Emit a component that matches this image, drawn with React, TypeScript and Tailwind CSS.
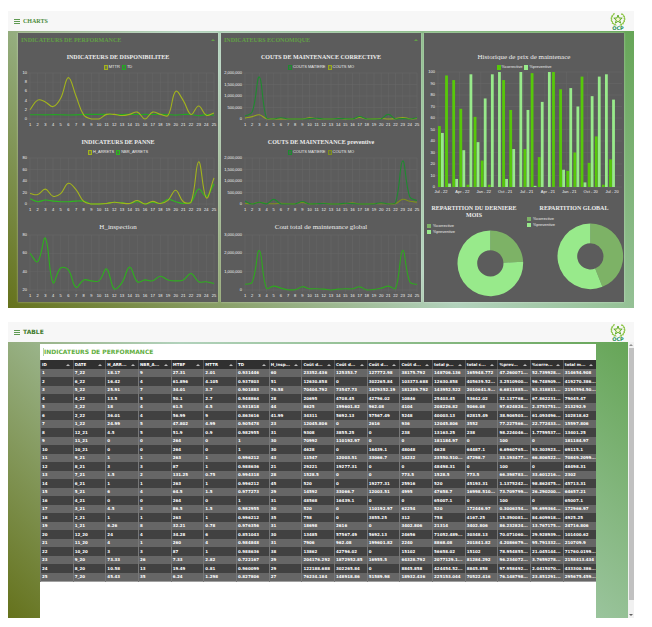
import React from "react";

const MONTHS = Array.from({ length: 25 }, (_, i) => i + 1);

const HEADERS = [
  "ID", "DATE", "H_ARR...", "NBR_A...", "MTBF", "MTTR", "TD", "H_insp...", "Coût d...", "Coût d...",
  "Coût d...", "Coût d...", "total p...", "total c...", "%prev...", "%corre...", "total m...",
];

const ROWS = `1|7_22|18.17|9|27.31|2.01|0.931446|60|23352.436|125353.7|127772.98|38175.792|148706.136|165948.772|47.260071...|52.739928...|314654.908
2|6_22|16.42|4|61.896|4.105|0.937803|51|12630.858|0|302265.84|103373.688|12630.858|405639.52...|3.2510900...|96.748909...|419270.386...
3|5_22|25.91|7|34.01|3.7|0.901883|76.58|70404.792|73547.73|1829352.19|181289.792|143952.522|2010641.9...|6.6811885...|93.318811...|2154594.50...
4|4_22|13.5|5|50.1|2.7|0.948864|28|20695|4708.45|42796.02|10846|25403.45|53642.02|32.137768...|67.862231...|79045.47
5|3_22|18|4|61.5|4.5|0.931818|44|8625|199601.82|962.08|4104|208226.82|5066.08|97.624824...|2.3751751...|213292.9
6|2_22|36.01|4|56.99|9|0.863616|41.99|34311|5692.13|57567.49|5248|40003.13|62815.49|38.906503...|61.093496...|102818.62
7|1_22|24.99|5|47.802|4.99|0.905478|23|12045.806|0|2616|936|12045.806|3552|77.227566...|22.772433...|15597.806
8|12_21|4.5|5|51.9|0.9|0.982955|31|9308|3855.25|0|238|13163.25|238|98.224046...|1.7759537...|13401.25
9|11_21|0|0|264|0|1|30|70992|110192.97|0|0|181184.97|0|100|0|181184.97
10|10_21|0|0|264|0|1|30|4628|0|16439.1|48048|4628|64487.1|6.6960765...|93.303923...|69115.1
11|9_21|1|1|263|1|0.996212|43|11547|12003.51|33066.7|14232|23550.510...|47298.7|33.193477...|66.806522...|70849.2099...
12|8_21|3|3|87|1|0.988636|21|29221|19277.31|0|0|48498.31|0|100|0|48498.31
13|7_21|1.5|2|131.25|0.75|0.994318|28|1528.5|0|0|773.5|1528.5|773.5|66.398783...|33.601216...|2302
14|6_21|1|1|263|1|0.996212|45|520|0|19277.31|25916|520|45193.31|1.1375242...|98.862475...|45713.31
15|5_21|6|4|64.5|1.5|0.977273|29|14592|33066.7|12003.51|4995|47658.7|16998.510...|73.709799...|26.290200...|64657.21
16|4_21|0|0|264|0|1|31|48568|16439.1|0|0|65007.1|0|100|0|65007.1
17|3_21|4.5|3|86.5|1.5|0.982955|30|520|0|110192.97|62254|520|172446.97|0.3006354...|99.699364...|172966.97
18|2_21|1|1|263|1|0.996212|35|758|0|3855.25|312|758|4167.25|15.390081...|84.609918...|4925.25
19|1_21|6.26|8|32.21|0.78|0.976356|31|18698|2616|0|3402.806|21314|3402.806|86.232824...|13.767175...|24716.806
20|12_20|24|4|34.28|6|0.851043|30|13485|57567.49|5692.13|24656|71052.489...|30348.13|70.071060...|29.928939...|101400.62
21|11_20|4|1|260|4|0.984848|31|7906|962.08|199601.82|2240|8868.08|201841.82|4.2086679...|95.791332...|210709.9
22|10_20|3|3|87|1|0.988636|38|13862|42796.02|0|15102|56658.02|15102|78.954855...|21.045144...|71760.0199...
23|9_20|73.33|26|7.33|2.82|0.722167|29|204176.292|1872952.85|16955.5|64328.792|2077129.1...|81284.292|96.234072...|3.7659278...|2158413.434
24|8_20|10.58|13|19.49|0.81|0.960099|29|122188.688|302265.84|0|8845.858|424454.52...|8845.858|97.958492...|2.0415070...|433300.386...
25|7_20|45.43|35|6.24|1.298|0.827806|27|76234.184|148918.86|51589.98|18932.436|225153.044|70522.416|76.148798...|23.851291...|295675.459...`
  .split("\n")
  .map((line) => line.split("|"));

const column = (i: number) => ROWS.map((r) => parseFloat(r[i]));

const CORRECTIVE = [53, 97, 93, 68, 2, 61, 23, 2, 0, 93, 67, 0, 33, 99, 26, 0, 100, 85, 14, 30, 96, 21, 44, 2, 24];
const PREVENTIVE = [47, 3, 7, 32, 98, 39, 77, 98, 100, 7, 33, 100, 67, 1, 74, 100, 0, 15, 86, 70, 4, 79, 96, 98, 76];

type Point = { x: number; y: number };

// Smooth curve through the points; control points stay inside the plot.
function curve(pts: Point[], top: number, bottom: number) {
  const t = 0.4;
  const clamp = (y: number) => Math.min(bottom, Math.max(top, y));
  const ctrl = pts.map((p, i) => {
    const a = pts[Math.max(0, i - 1)];
    const b = pts[Math.min(pts.length - 1, i + 1)];
    const d1 = Math.hypot(p.x - a.x, p.y - a.y);
    const d2 = Math.hypot(b.x - p.x, b.y - p.y);
    const f1 = (t * d1) / (d1 + d2);
    const f2 = (t * d2) / (d1 + d2);
    return {
      px: p.x - f1 * (b.x - a.x),
      py: clamp(p.y - f1 * (b.y - a.y)),
      nx: p.x + f2 * (b.x - a.x),
      ny: clamp(p.y + f2 * (b.y - a.y)),
    };
  });
  return pts
    .map((p, i) =>
      i === 0 ? `M${p.x},${p.y}` : `C${ctrl[i - 1].nx},${ctrl[i - 1].ny} ${ctrl[i].px},${ctrl[i].py} ${p.x},${p.y}`,
    )
    .join(" ");
}

type Series = { name: string; color: string; values: number[] };

function Legend({ items }: { items: { name: string; color: string; filled?: boolean }[] }) {
  return (
    <ul className="flex h-2 items-center justify-center gap-[2px] text-[4px] leading-none text-[#ececec]">
      {items.map((s) => (
        <li key={s.name} className="flex items-center gap-px">
          <span
            className="h-[5px] w-1 border"
            style={{ borderColor: s.color, backgroundColor: s.filled ? s.color : `${s.color}55` }}
          />
          {s.name}
        </li>
      ))}
    </ul>
  );
}

function ChartTitle({ children, large }: { children: React.ReactNode; large?: boolean }) {
  return (
    <h3
      className={`py-[3px] text-center font-['Liberation_Serif',serif] leading-[6px] text-[#ececec] ${
        large ? "text-[7px]" : "text-[6px] font-bold"
      }`}
    >
      {children}
    </h3>
  );
}

function LineChart(props: {
  title: string;
  series: Series[];
  ticks: number[];
  left: number;
  right: number;
  plot: number;
  height: number;
  legend?: boolean;
}) {
  const { title, series, ticks, left, right, plot, height, legend } = props;
  const top = 2;
  const min = ticks[0];
  const max = ticks[ticks.length - 1];
  const bottom = top + plot;
  const x = (i: number) => left + ((right - left) * i) / 24;
  const y = (v: number) => bottom - ((v - min) / (max - min)) * plot;
  return (
    <figure>
      <ChartTitle large={!legend}>{title}</ChartTitle>
      {legend && <Legend items={series} />}
      <svg
        viewBox={`0 0 200 ${height}`}
        className="block w-full overflow-visible font-['Liberation_Sans',sans-serif] text-[4px]"
        role="img"
        aria-label={title}
      >
        <g stroke="#686868" strokeWidth="0.5">
          {MONTHS.map((m, i) => (
            <line key={m} x1={x(i)} x2={x(i)} y1={top} y2={bottom + 2} />
          ))}
          {ticks.map((v) => (
            <line key={v} x1={left - 2} x2={right} y1={y(v)} y2={y(v)} />
          ))}
        </g>
        <g fill="#f4f4f4">
          {ticks.map((v) => (
            <text key={v} x={left - 3} y={y(v) + 1} textAnchor="end">
              {v.toLocaleString("en-US")}
            </text>
          ))}
          {MONTHS.map((m, i) => (
            <text key={m} x={x(i)} y={bottom + 7} textAnchor="middle">
              {m}
            </text>
          ))}
        </g>
        {[...series].reverse().map((s) => (
          <path
            key={s.name}
            d={curve(s.values.map((v, i) => ({ x: x(i), y: y(v) })), top, bottom)}
            fill="none"
            stroke={s.color}
            strokeWidth="1.1"
          />
        ))}
      </svg>
    </figure>
  );
}

function BarChart() {
  const left = 14;
  const base = 116;
  const step = 7.13;
  const names = ["Jul - 22", "Apr - 22", "Jan - 22", "Oct - 21", "Jul - 21", "Apr - 21", "Jan - 21", "Oct - 20", "Jul - 20"];
  const h = (v: number) => v * 1.15;
  return (
    <figure>
      <ChartTitle large>Historique de prix de maintenace</ChartTitle>
      <Legend
        items={[
          { name: "%corrective", color: "#57c80a", filled: true },
          { name: "%preventive", color: "#98ea8b", filled: true },
        ]}
      />
      <svg
        viewBox="0 0 200 126"
        className="block w-full overflow-visible font-['Liberation_Sans',sans-serif] text-[4px]"
        role="img"
        aria-label="Historique de prix de maintenace"
      >
        <g stroke="#686868" strokeWidth="0.5">
          {MONTHS.filter((m) => m % 3 === 1).map((m) => (
            <line key={m} x1={left + (m - 1) * step} x2={left + (m - 1) * step} y1="1" y2={base + 2} />
          ))}
          {MONTHS.slice(0, 11).map((m) => (
            <line key={m} x1={left - 2} x2="198" y1={base - h((m - 1) * 10)} y2={base - h((m - 1) * 10)} />
          ))}
        </g>
        {CORRECTIVE.map((c, i) => (
          <g key={i}>
            <rect x={left + i * step} y={base - h(c)} width="2.8" height={h(c)} fill="#57c80a" />
            <rect x={left + 3 + i * step} y={base - h(PREVENTIVE[i])} width="2.8" height={h(PREVENTIVE[i])} fill="#98ea8b" />
          </g>
        ))}
        <g fill="#f4f4f4">
          {MONTHS.slice(0, 11).map((m) => (
            <text key={m} x={left - 3} y={base + 1 - h((m - 1) * 10)} textAnchor="end">
              {(m - 1) * 10}
            </text>
          ))}
          {names.map((n, i) => (
            <text key={n} x={left + 3 + i * 3 * step} y={base + 6} textAnchor="middle">
              {n}
            </text>
          ))}
        </g>
      </svg>
    </figure>
  );
}

function Donut({ title, share }: { title: string; share: number }) {
  const a = share * 2 * Math.PI;
  const pt = (r: number, t: number) => `${33 + r * Math.sin(t)},${33 - r * Math.cos(t)}`;
  const slice = (from: number, to: number) =>
    `M${pt(32.5, from)} A32.5,32.5 0 ${to - from > Math.PI ? 1 : 0} 1 ${pt(32.5, to)} L${pt(13, to)} A13,13 0 ${
      to - from > Math.PI ? 1 : 0
    } 0 ${pt(13, from)} Z`;
  return (
    <figure className="min-w-0 flex-1">
      <h3 className="px-1 text-center font-['Liberation_Serif',serif] text-[6px] leading-[7px] font-bold text-[#ececec]">
        {title}
      </h3>
      <ul className="mt-1 ml-[3px] text-[4px] leading-[6px] text-[#ececec]">
        <li className="flex items-center gap-[2px]">
          <span className="size-1 bg-[#7db266]" />
          %corrective
        </li>
        <li className="flex items-center gap-[2px]">
          <span className="size-1 bg-[#98ea8b]" />
          %preventive
        </li>
      </ul>
      <svg viewBox="0 0 66 66" className="-mt-[5px] ml-auto block w-2/3" role="img" aria-label={title}>
        <path d={slice(0, a)} fill="#7db266" />
        <path d={slice(a, 2 * Math.PI)} fill="#98ea8b" />
      </svg>
    </figure>
  );
}

function OcpLogo() {
  const leaves = [-150, -128, -106, -84, -62, -40, 40, 62, 84, 106, 128, 150];
  return (
    <svg viewBox="0 0 16 19" className="h-[19px] w-4" role="img" aria-label="OCP">
      <g fill="none" stroke="#7aba3c" strokeWidth="0.8">
        <path d="M4.5 1.5 A6.3 6.3 0 0 0 6.5 13.2 M11.5 1.5 A6.3 6.3 0 0 1 9.5 13.2" />
      </g>
      {leaves.map((d) => (
        <ellipse key={d} cx="8" cy="0.8" rx="0.6" ry="1.3" fill="#8cc63f" transform={`rotate(${d} 8 7.3) rotate(55 8 0.8)`} />
      ))}
      <path
        d="M8 3 L9.1 6 L12.2 6.1 L9.7 8 L10.6 11.1 L8 9.3 L5.4 11.1 L6.3 8 L3.8 6.1 L6.9 6 Z"
        fill="#f2f6c8"
        stroke="#62ac2c"
        strokeWidth="1"
      />
      <text
        x="8"
        y="18"
        textAnchor="middle"
        className="fill-[#24905a] font-['DejaVu_Sans',sans-serif] text-[5px] font-bold"
      >
        OCP
      </text>
    </svg>
  );
}

function TopBar({ children }: { children: React.ReactNode }) {
  return (
    <header className="flex h-5 items-center justify-between bg-[#f7f7f7] pr-2 pl-[6px]">
      <div className="flex items-center gap-[3px]">
        <button type="button" aria-label="Menu" className="flex w-[6px] flex-col gap-px">
          <span className="h-px bg-[#5f9a52]" />
          <span className="h-px bg-[#5f9a52]" />
          <span className="h-px bg-[#5f9a52]" />
        </button>
        {children}
      </div>
      <OcpLogo />
    </header>
  );
}

function Panel({ title, children }: { title: string; children: React.ReactNode }) {
  return (
    <section className="bg-[#5c5c5c] shadow-[0_0_2px_#ffffff80]">
      <div className="mb-[5px] flex h-[13px] items-center justify-between px-[3px]">
        <h2 className="font-['Liberation_Serif',serif] text-[6px] leading-none font-bold text-[#62a046]">{title}</h2>
        <button
          type="button"
          aria-label="Réduire"
          className="size-0 border-x-2 border-b-2 border-x-transparent border-b-[#62a046]"
        />
      </div>
      <div className="flex flex-col gap-[9px]">{children}</div>
    </section>
  );
}

export default function App() {
  const million = [0, 500000, 1000000, 1500000, 2000000];
  return (
    <main className="flex flex-col gap-[14px] bg-white pt-[11px] pr-[18px] pb-2 pl-2 font-['Liberation_Sans',sans-serif]">
      <section>
        <TopBar>
          <h1 className="font-['Liberation_Serif',serif] text-[6px] leading-none font-bold text-[#4a8a3a]">CHARTS</h1>
        </TopBar>
        <div className="grid grid-cols-3 gap-[3px] bg-[linear-gradient(45deg,#65721c,#b2d2bc_50%,#66a557)] px-[10px] pt-[2px] pb-[6px]">
          <Panel title="INDICATEURS DE PERFORMANCE">
            <LineChart
              title="INDICATEURS DE DISPONIBILITEE"
              legend
              ticks={[0, 2, 4, 6, 8, 10]}
              left={12}
              right={196}
              plot={46}
              height={56}
              series={[
                { name: "MTTR", color: "#a3b41c", values: column(5) },
                { name: "TD", color: "#22a822", values: column(6) },
              ]}
            />
            <LineChart
              title="INDICATEURS DE PANNE"
              legend
              ticks={[0, 20, 40, 60, 80]}
              left={12}
              right={196}
              plot={46}
              height={56}
              series={[
                { name: "H_ARRETS", color: "#a3b41c", values: column(2) },
                { name: "NBR_ARRETS", color: "#2eb81e", values: column(3) },
              ]}
            />
            <LineChart
              title="H_inspection"
              ticks={[20, 40, 60, 80]}
              left={12}
              right={196}
              plot={55}
              height={69}
              series={[{ name: "H_inspection", color: "#2eb01e", values: column(7) }]}
            />
          </Panel>
          <Panel title="INDICATEURS ECONOMIQUE">
            <LineChart
              title="COUTS DE MAINTENANCE CORRECTIVE"
              legend
              ticks={million}
              left={24}
              right={196}
              plot={46}
              height={56}
              series={[
                { name: "COUTS MATIERE", color: "#1f8a30", values: column(10) },
                { name: "COUTS MO", color: "#98a81c", values: column(11) },
              ]}
            />
            <LineChart
              title="COUTS DE MAINTENANCE preventive"
              legend
              ticks={million}
              left={24}
              right={196}
              plot={46}
              height={56}
              series={[
                { name: "COUTS MATIERE", color: "#1f8a30", values: column(9) },
                { name: "COUTS MO", color: "#7f8f1c", values: column(8) },
              ]}
            />
            <LineChart
              title="Cout total de maintenance global"
              ticks={[0, 1000000, 2000000, 3000000]}
              left={24}
              right={196}
              plot={55}
              height={69}
              series={[{ name: "Total", color: "#2ea81e", values: column(16) }]}
            />
          </Panel>
          <section className="bg-[#5c5c5c] pt-[18px] shadow-[0_0_2px_#ffffff80]">
            <BarChart />
            <div className="mt-2 flex items-start">
              <Donut title="REPARTITION DU DERNIERE MOIS" share={0.242} />
              <Donut title="REPARTITION GLOBAL" share={0.44} />
            </div>
          </section>
        </div>
      </section>

      <section className="font-['DejaVu_Sans',sans-serif] font-bold">
        <TopBar>
          <h1 className="text-[6px] leading-none text-[#3f7a2c]">TABLE</h1>
        </TopBar>
        <div className="flex">
          <div className="flex-1 bg-[linear-gradient(45deg,#65721c,#b2d2bc_50%,#66a557)] px-8 pt-[2px]">
            <div className="bg-white pb-9">
              <div className="flex h-4 items-center pl-[3px]">
                <h2 className="border-l border-[#b5d8a8] text-[6px] leading-[8px] text-[#5fae3e]">
                  INDICATEURS DE PERFORMANCE
                </h2>
              </div>
              <table className="w-full table-fixed border-collapse border-b border-[#a0a0a0] text-left text-[4px] leading-[4px] text-white">
                <thead>
                  <tr className="h-[9px] bg-[#303030]">
                    {HEADERS.map((h, i) => (
                      <th key={i} scope="col" className="border-l border-[#585858] p-0 px-px font-bold">
                        <button type="button" className="flex w-full items-center justify-between pr-[2px]">
                          {h}
                          <span className="size-0 border-x-[2px] border-b-[2px] border-x-transparent border-b-[#bcbcbc]" />
                        </button>
                      </th>
                    ))}
                  </tr>
                </thead>
                <tbody>
                  {ROWS.map((r) => (
                    <tr key={r[0]} className="h-[8px] bg-[#666666] even:h-[9px] even:bg-[#414141]">
                      {r.map((c, i) => (
                        <td key={i} className="overflow-hidden border-l border-[#777777] p-0 px-px whitespace-nowrap">
                          {c}
                        </td>
                      ))}
                    </tr>
                  ))}
                </tbody>
              </table>
            </div>
          </div>
          <div className="flex w-[6px] flex-col items-center bg-[#f1f1f1] py-[2px]" aria-hidden="true">
            <span className="size-0 border-x-[2px] border-b-[2px] border-x-transparent border-b-[#909090]" />
            <span className="mt-[2px] mb-[14px] w-[5px] flex-1 bg-[#c1c1c1]" />
            <span className="size-0 border-x-[2px] border-t-[2px] border-x-transparent border-t-[#606060]" />
          </div>
        </div>
      </section>
    </main>
  );
}
